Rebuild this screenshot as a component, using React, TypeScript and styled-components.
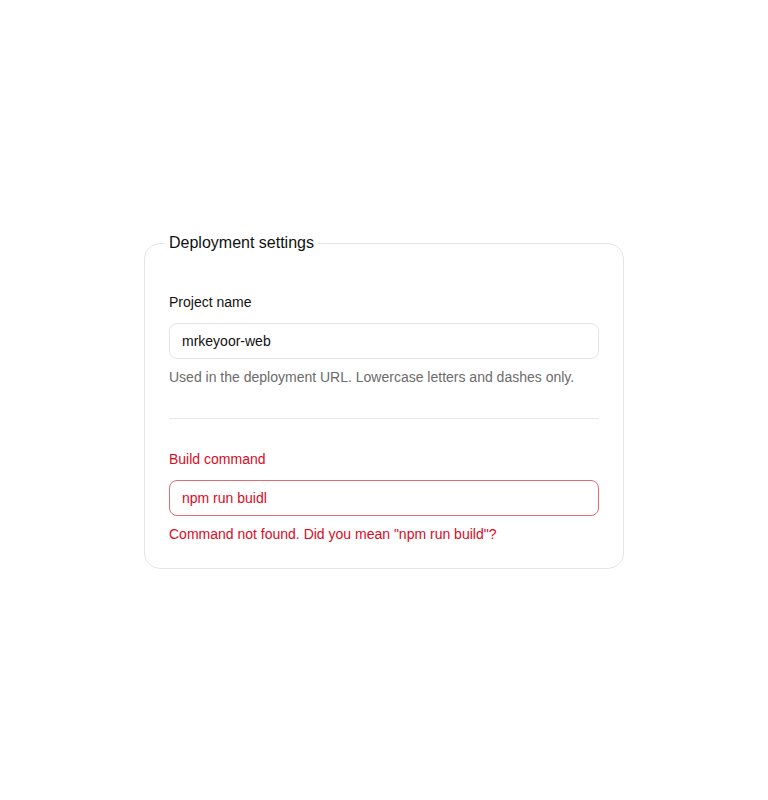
import styled, { createGlobalStyle } from 'styled-components';

const GlobalStyle = createGlobalStyle`
  body {
    margin: 0;
    background: #ffffff;
    font-family: "Liberation Sans", Arial, sans-serif;
    color: #111111;
  }
`;

const Page = styled.div`
  box-sizing: border-box;
  min-height: 100vh;
  padding-top: 3px;
  display: flex;
  align-items: center;
  justify-content: center;
`;

const Card = styled.fieldset`
  width: 480px;
  box-sizing: border-box;
  margin: 0;
  padding: 40px 24px 24px;
  border: 1px solid #e4e4e4;
  border-radius: 16px;
  min-width: 0;
`;

const Legend = styled.legend`
  font-size: 16px;
  line-height: 18px;
  padding: 0 4px;
  margin-left: -4px;
  color: #111111;
`;

const Field = styled.div`
  display: flex;
  flex-direction: column;
`;

const Label = styled.label<{ $error?: boolean }>`
  font-size: 14px;
  line-height: 20px;
  margin-bottom: 11px;
  color: ${(p) => (p.$error ? '#dc0a1e' : '#111111')};
`;

const Input = styled.input<{ $error?: boolean }>`
  box-sizing: border-box;
  height: 36px;
  width: 100%;
  padding: 0 12px;
  font-family: inherit;
  font-size: 14px;
  border-radius: 8px;
  outline: none;
  background: #ffffff;
  border: 1px solid ${(p) => (p.$error ? '#e46a73' : '#e4e4e4')};
  color: ${(p) => (p.$error ? '#dc0a1e' : '#111111')};
`;

const Hint = styled.p<{ $error?: boolean }>`
  margin: 8px 0 0;
  font-size: 14px;
  line-height: 20px;
  color: ${(p) => (p.$error ? '#dc0a1e' : '#6b6b6b')};
`;

const Divider = styled.hr`
  border: none;
  border-top: 1px solid #e8e8e8;
  margin: 31px 0 30px;
`;

export default function App() {
  return (
    <>
      <GlobalStyle />
      <Page>
        <Card>
          <Legend>Deployment settings</Legend>
          <Field>
            <Label htmlFor="project">Project name</Label>
            <Input id="project" defaultValue="mrkeyoor-web" />
            <Hint>Used in the deployment URL. Lowercase letters and dashes only.</Hint>
          </Field>
          <Divider />
          <Field>
            <Label htmlFor="build" $error>
              Build command
            </Label>
            <Input id="build" $error defaultValue="npm run buidl" />
            <Hint $error>Command not found. Did you mean "npm run build"?</Hint>
          </Field>
        </Card>
      </Page>
    </>
  );
}
